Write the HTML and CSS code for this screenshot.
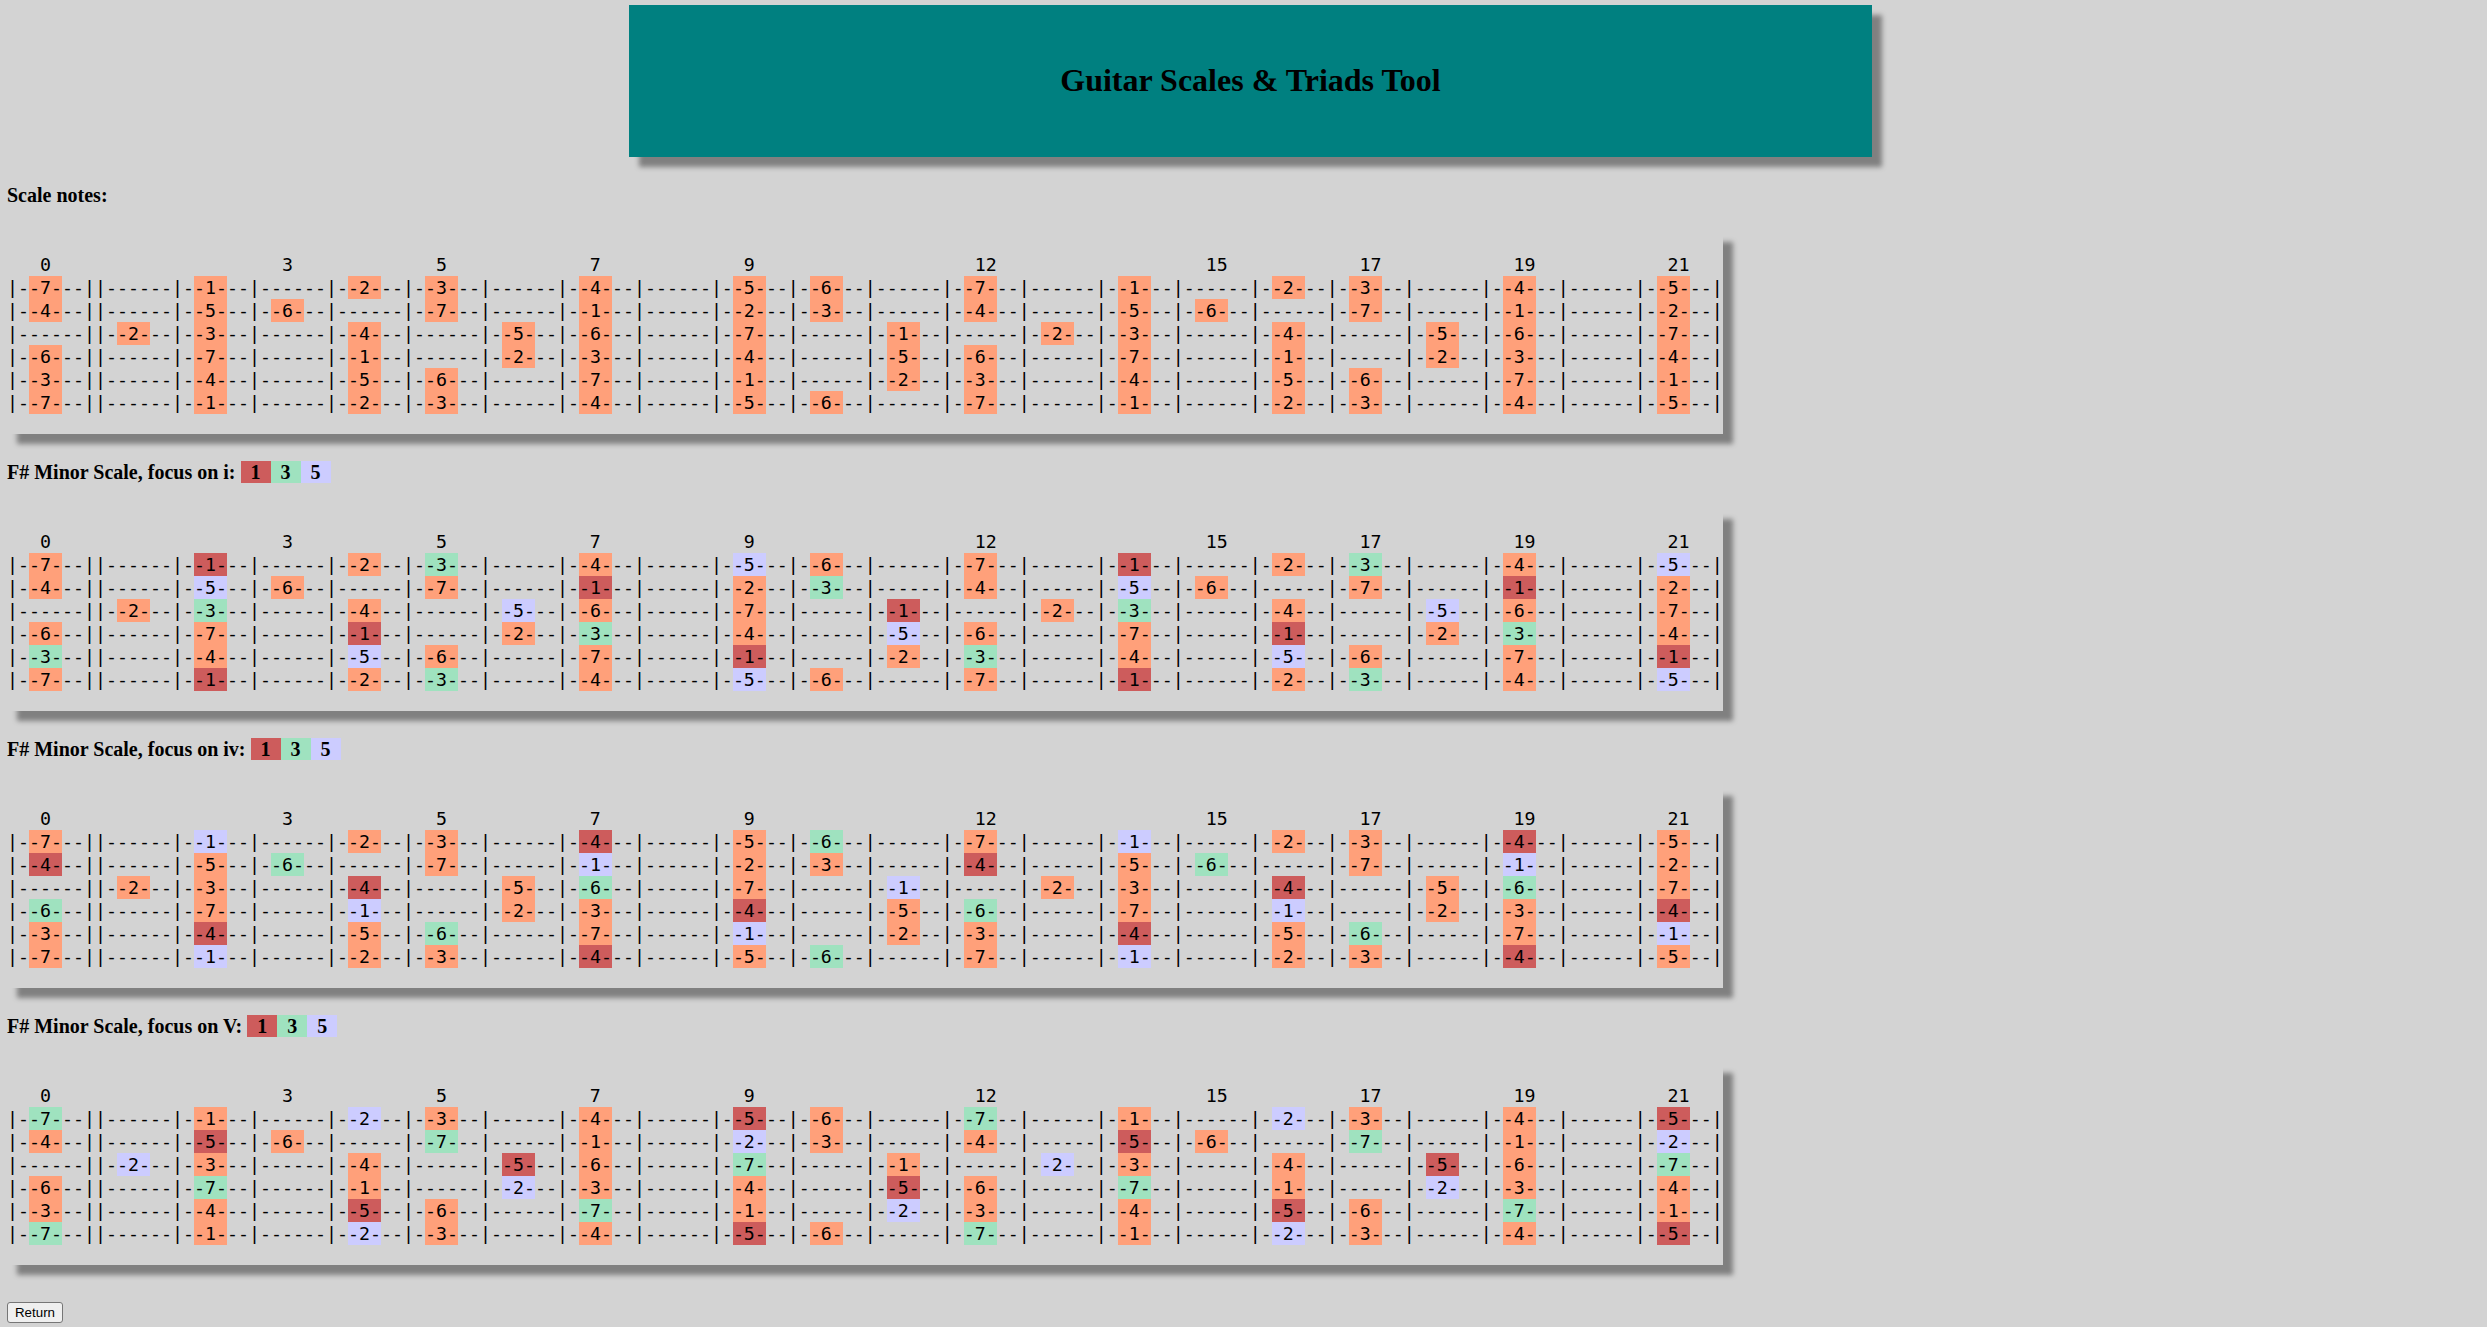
FILE: index.html
```html
<!DOCTYPE html>
<html lang="en">
<head>
  <meta charset="UTF-8" />
  <title>Guitar Scales &amp; Triads Tool</title>
  <link rel="stylesheet" href="styles.css">
</head>
<body>
  <div class="banner"><h1>Guitar Scales &amp; Triads Tool</h1></div>

  <div class="label">Scale notes:</div>
  <pre class="tab">   0                     3             5             7             9                    12                   15            17            19            21
|-<span class="s">-7-</span>--||------|-<span class="s">-1-</span>--|------|-<span class="s">-2-</span>--|-<span class="s">-3-</span>--|------|-<span class="s">-4-</span>--|------|-<span class="s">-5-</span>--|-<span class="s">-6-</span>--|------|-<span class="s">-7-</span>--|------|-<span class="s">-1-</span>--|------|-<span class="s">-2-</span>--|-<span class="s">-3-</span>--|------|-<span class="s">-4-</span>--|------|-<span class="s">-5-</span>--|
|-<span class="s">-4-</span>--||------|-<span class="s">-5-</span>--|-<span class="s">-6-</span>--|------|-<span class="s">-7-</span>--|------|-<span class="s">-1-</span>--|------|-<span class="s">-2-</span>--|-<span class="s">-3-</span>--|------|-<span class="s">-4-</span>--|------|-<span class="s">-5-</span>--|-<span class="s">-6-</span>--|------|-<span class="s">-7-</span>--|------|-<span class="s">-1-</span>--|------|-<span class="s">-2-</span>--|
|------||-<span class="s">-2-</span>--|-<span class="s">-3-</span>--|------|-<span class="s">-4-</span>--|------|-<span class="s">-5-</span>--|-<span class="s">-6-</span>--|------|-<span class="s">-7-</span>--|------|-<span class="s">-1-</span>--|------|-<span class="s">-2-</span>--|-<span class="s">-3-</span>--|------|-<span class="s">-4-</span>--|------|-<span class="s">-5-</span>--|-<span class="s">-6-</span>--|------|-<span class="s">-7-</span>--|
|-<span class="s">-6-</span>--||------|-<span class="s">-7-</span>--|------|-<span class="s">-1-</span>--|------|-<span class="s">-2-</span>--|-<span class="s">-3-</span>--|------|-<span class="s">-4-</span>--|------|-<span class="s">-5-</span>--|-<span class="s">-6-</span>--|------|-<span class="s">-7-</span>--|------|-<span class="s">-1-</span>--|------|-<span class="s">-2-</span>--|-<span class="s">-3-</span>--|------|-<span class="s">-4-</span>--|
|-<span class="s">-3-</span>--||------|-<span class="s">-4-</span>--|------|-<span class="s">-5-</span>--|-<span class="s">-6-</span>--|------|-<span class="s">-7-</span>--|------|-<span class="s">-1-</span>--|------|-<span class="s">-2-</span>--|-<span class="s">-3-</span>--|------|-<span class="s">-4-</span>--|------|-<span class="s">-5-</span>--|-<span class="s">-6-</span>--|------|-<span class="s">-7-</span>--|------|-<span class="s">-1-</span>--|
|-<span class="s">-7-</span>--||------|-<span class="s">-1-</span>--|------|-<span class="s">-2-</span>--|-<span class="s">-3-</span>--|------|-<span class="s">-4-</span>--|------|-<span class="s">-5-</span>--|-<span class="s">-6-</span>--|------|-<span class="s">-7-</span>--|------|-<span class="s">-1-</span>--|------|-<span class="s">-2-</span>--|-<span class="s">-3-</span>--|------|-<span class="s">-4-</span>--|------|-<span class="s">-5-</span>--|</pre>

  <div class="label">F# Minor Scale, focus on i: <span class="chip r">1</span><span class="chip t">3</span><span class="chip f">5</span></div>
  <pre class="tab">   0                     3             5             7             9                    12                   15            17            19            21
|-<span class="s">-7-</span>--||------|-<span class="r">-1-</span>--|------|-<span class="s">-2-</span>--|-<span class="t">-3-</span>--|------|-<span class="s">-4-</span>--|------|-<span class="f">-5-</span>--|-<span class="s">-6-</span>--|------|-<span class="s">-7-</span>--|------|-<span class="r">-1-</span>--|------|-<span class="s">-2-</span>--|-<span class="t">-3-</span>--|------|-<span class="s">-4-</span>--|------|-<span class="f">-5-</span>--|
|-<span class="s">-4-</span>--||------|-<span class="f">-5-</span>--|-<span class="s">-6-</span>--|------|-<span class="s">-7-</span>--|------|-<span class="r">-1-</span>--|------|-<span class="s">-2-</span>--|-<span class="t">-3-</span>--|------|-<span class="s">-4-</span>--|------|-<span class="f">-5-</span>--|-<span class="s">-6-</span>--|------|-<span class="s">-7-</span>--|------|-<span class="r">-1-</span>--|------|-<span class="s">-2-</span>--|
|------||-<span class="s">-2-</span>--|-<span class="t">-3-</span>--|------|-<span class="s">-4-</span>--|------|-<span class="f">-5-</span>--|-<span class="s">-6-</span>--|------|-<span class="s">-7-</span>--|------|-<span class="r">-1-</span>--|------|-<span class="s">-2-</span>--|-<span class="t">-3-</span>--|------|-<span class="s">-4-</span>--|------|-<span class="f">-5-</span>--|-<span class="s">-6-</span>--|------|-<span class="s">-7-</span>--|
|-<span class="s">-6-</span>--||------|-<span class="s">-7-</span>--|------|-<span class="r">-1-</span>--|------|-<span class="s">-2-</span>--|-<span class="t">-3-</span>--|------|-<span class="s">-4-</span>--|------|-<span class="f">-5-</span>--|-<span class="s">-6-</span>--|------|-<span class="s">-7-</span>--|------|-<span class="r">-1-</span>--|------|-<span class="s">-2-</span>--|-<span class="t">-3-</span>--|------|-<span class="s">-4-</span>--|
|-<span class="t">-3-</span>--||------|-<span class="s">-4-</span>--|------|-<span class="f">-5-</span>--|-<span class="s">-6-</span>--|------|-<span class="s">-7-</span>--|------|-<span class="r">-1-</span>--|------|-<span class="s">-2-</span>--|-<span class="t">-3-</span>--|------|-<span class="s">-4-</span>--|------|-<span class="f">-5-</span>--|-<span class="s">-6-</span>--|------|-<span class="s">-7-</span>--|------|-<span class="r">-1-</span>--|
|-<span class="s">-7-</span>--||------|-<span class="r">-1-</span>--|------|-<span class="s">-2-</span>--|-<span class="t">-3-</span>--|------|-<span class="s">-4-</span>--|------|-<span class="f">-5-</span>--|-<span class="s">-6-</span>--|------|-<span class="s">-7-</span>--|------|-<span class="r">-1-</span>--|------|-<span class="s">-2-</span>--|-<span class="t">-3-</span>--|------|-<span class="s">-4-</span>--|------|-<span class="f">-5-</span>--|</pre>

  <div class="label">F# Minor Scale, focus on iv: <span class="chip r">1</span><span class="chip t">3</span><span class="chip f">5</span></div>
  <pre class="tab">   0                     3             5             7             9                    12                   15            17            19            21
|-<span class="s">-7-</span>--||------|-<span class="f">-1-</span>--|------|-<span class="s">-2-</span>--|-<span class="s">-3-</span>--|------|-<span class="r">-4-</span>--|------|-<span class="s">-5-</span>--|-<span class="t">-6-</span>--|------|-<span class="s">-7-</span>--|------|-<span class="f">-1-</span>--|------|-<span class="s">-2-</span>--|-<span class="s">-3-</span>--|------|-<span class="r">-4-</span>--|------|-<span class="s">-5-</span>--|
|-<span class="r">-4-</span>--||------|-<span class="s">-5-</span>--|-<span class="t">-6-</span>--|------|-<span class="s">-7-</span>--|------|-<span class="f">-1-</span>--|------|-<span class="s">-2-</span>--|-<span class="s">-3-</span>--|------|-<span class="r">-4-</span>--|------|-<span class="s">-5-</span>--|-<span class="t">-6-</span>--|------|-<span class="s">-7-</span>--|------|-<span class="f">-1-</span>--|------|-<span class="s">-2-</span>--|
|------||-<span class="s">-2-</span>--|-<span class="s">-3-</span>--|------|-<span class="r">-4-</span>--|------|-<span class="s">-5-</span>--|-<span class="t">-6-</span>--|------|-<span class="s">-7-</span>--|------|-<span class="f">-1-</span>--|------|-<span class="s">-2-</span>--|-<span class="s">-3-</span>--|------|-<span class="r">-4-</span>--|------|-<span class="s">-5-</span>--|-<span class="t">-6-</span>--|------|-<span class="s">-7-</span>--|
|-<span class="t">-6-</span>--||------|-<span class="s">-7-</span>--|------|-<span class="f">-1-</span>--|------|-<span class="s">-2-</span>--|-<span class="s">-3-</span>--|------|-<span class="r">-4-</span>--|------|-<span class="s">-5-</span>--|-<span class="t">-6-</span>--|------|-<span class="s">-7-</span>--|------|-<span class="f">-1-</span>--|------|-<span class="s">-2-</span>--|-<span class="s">-3-</span>--|------|-<span class="r">-4-</span>--|
|-<span class="s">-3-</span>--||------|-<span class="r">-4-</span>--|------|-<span class="s">-5-</span>--|-<span class="t">-6-</span>--|------|-<span class="s">-7-</span>--|------|-<span class="f">-1-</span>--|------|-<span class="s">-2-</span>--|-<span class="s">-3-</span>--|------|-<span class="r">-4-</span>--|------|-<span class="s">-5-</span>--|-<span class="t">-6-</span>--|------|-<span class="s">-7-</span>--|------|-<span class="f">-1-</span>--|
|-<span class="s">-7-</span>--||------|-<span class="f">-1-</span>--|------|-<span class="s">-2-</span>--|-<span class="s">-3-</span>--|------|-<span class="r">-4-</span>--|------|-<span class="s">-5-</span>--|-<span class="t">-6-</span>--|------|-<span class="s">-7-</span>--|------|-<span class="f">-1-</span>--|------|-<span class="s">-2-</span>--|-<span class="s">-3-</span>--|------|-<span class="r">-4-</span>--|------|-<span class="s">-5-</span>--|</pre>

  <div class="label">F# Minor Scale, focus on V: <span class="chip r">1</span><span class="chip t">3</span><span class="chip f">5</span></div>
  <pre class="tab">   0                     3             5             7             9                    12                   15            17            19            21
|-<span class="t">-7-</span>--||------|-<span class="s">-1-</span>--|------|-<span class="f">-2-</span>--|-<span class="s">-3-</span>--|------|-<span class="s">-4-</span>--|------|-<span class="r">-5-</span>--|-<span class="s">-6-</span>--|------|-<span class="t">-7-</span>--|------|-<span class="s">-1-</span>--|------|-<span class="f">-2-</span>--|-<span class="s">-3-</span>--|------|-<span class="s">-4-</span>--|------|-<span class="r">-5-</span>--|
|-<span class="s">-4-</span>--||------|-<span class="r">-5-</span>--|-<span class="s">-6-</span>--|------|-<span class="t">-7-</span>--|------|-<span class="s">-1-</span>--|------|-<span class="f">-2-</span>--|-<span class="s">-3-</span>--|------|-<span class="s">-4-</span>--|------|-<span class="r">-5-</span>--|-<span class="s">-6-</span>--|------|-<span class="t">-7-</span>--|------|-<span class="s">-1-</span>--|------|-<span class="f">-2-</span>--|
|------||-<span class="f">-2-</span>--|-<span class="s">-3-</span>--|------|-<span class="s">-4-</span>--|------|-<span class="r">-5-</span>--|-<span class="s">-6-</span>--|------|-<span class="t">-7-</span>--|------|-<span class="s">-1-</span>--|------|-<span class="f">-2-</span>--|-<span class="s">-3-</span>--|------|-<span class="s">-4-</span>--|------|-<span class="r">-5-</span>--|-<span class="s">-6-</span>--|------|-<span class="t">-7-</span>--|
|-<span class="s">-6-</span>--||------|-<span class="t">-7-</span>--|------|-<span class="s">-1-</span>--|------|-<span class="f">-2-</span>--|-<span class="s">-3-</span>--|------|-<span class="s">-4-</span>--|------|-<span class="r">-5-</span>--|-<span class="s">-6-</span>--|------|-<span class="t">-7-</span>--|------|-<span class="s">-1-</span>--|------|-<span class="f">-2-</span>--|-<span class="s">-3-</span>--|------|-<span class="s">-4-</span>--|
|-<span class="s">-3-</span>--||------|-<span class="s">-4-</span>--|------|-<span class="r">-5-</span>--|-<span class="s">-6-</span>--|------|-<span class="t">-7-</span>--|------|-<span class="s">-1-</span>--|------|-<span class="f">-2-</span>--|-<span class="s">-3-</span>--|------|-<span class="s">-4-</span>--|------|-<span class="r">-5-</span>--|-<span class="s">-6-</span>--|------|-<span class="t">-7-</span>--|------|-<span class="s">-1-</span>--|
|-<span class="t">-7-</span>--||------|-<span class="s">-1-</span>--|------|-<span class="f">-2-</span>--|-<span class="s">-3-</span>--|------|-<span class="s">-4-</span>--|------|-<span class="r">-5-</span>--|-<span class="s">-6-</span>--|------|-<span class="t">-7-</span>--|------|-<span class="s">-1-</span>--|------|-<span class="f">-2-</span>--|-<span class="s">-3-</span>--|------|-<span class="s">-4-</span>--|------|-<span class="r">-5-</span>--|</pre>

  <button class="return-btn">Return</button>
</body>
</html>
```
FILE: styles.css
```css
body {
  margin: 0;
  padding: 0 7px;
  background-color: #d3d3d3;
  color: #000;
  font-family: "Liberation Serif", "Times New Roman", serif;
  font-size: 20px;
}
.banner {
  display: flex;
  align-items: center;
  justify-content: center;
  width: 1243px;
  height: 152px;
  margin: 5px 0 0 622px;
  background-color: #008080;
  box-shadow: 10px 10px 5px #808080;
}
.banner h1 {
  margin: 0 0 2px;
  font-size: 32px;
  font-weight: bold;
}
.label {
  height: 22px;
  margin: 27px 0 26px;
  font-weight: bold;
  line-height: 22px;
}
.chip {
  display: inline-block;
  width: 30px;
  height: 22px;
  text-align: center;
}
.tab {
  width: 1716px;
  margin: 0;
  padding: 21px 0 20px;
  font-family: "DejaVu Sans Mono", "Liberation Mono", monospace;
  font-size: 18.27px;
  line-height: 23px;
  box-shadow: 10px 10px 5px #808080;
}
.tab span {
  display: inline-block;
  height: 23px;
}
.s { background-color: #ffa07a; }
.r { background-color: #cd5c5c; }
.t { background-color: #9fe2bf; }
.f { background-color: #ccccff; }
.return-btn {
  display: block;
  width: 56px;
  height: 21px;
  margin-top: 37px;
  padding: 1px 6px;
  border: 1px solid #767676;
  border-radius: 3px;
  background-color: #efefef;
  color: #000;
  font-family: "Liberation Sans", Arial, sans-serif;
  font-size: 13.33px;
}
```
